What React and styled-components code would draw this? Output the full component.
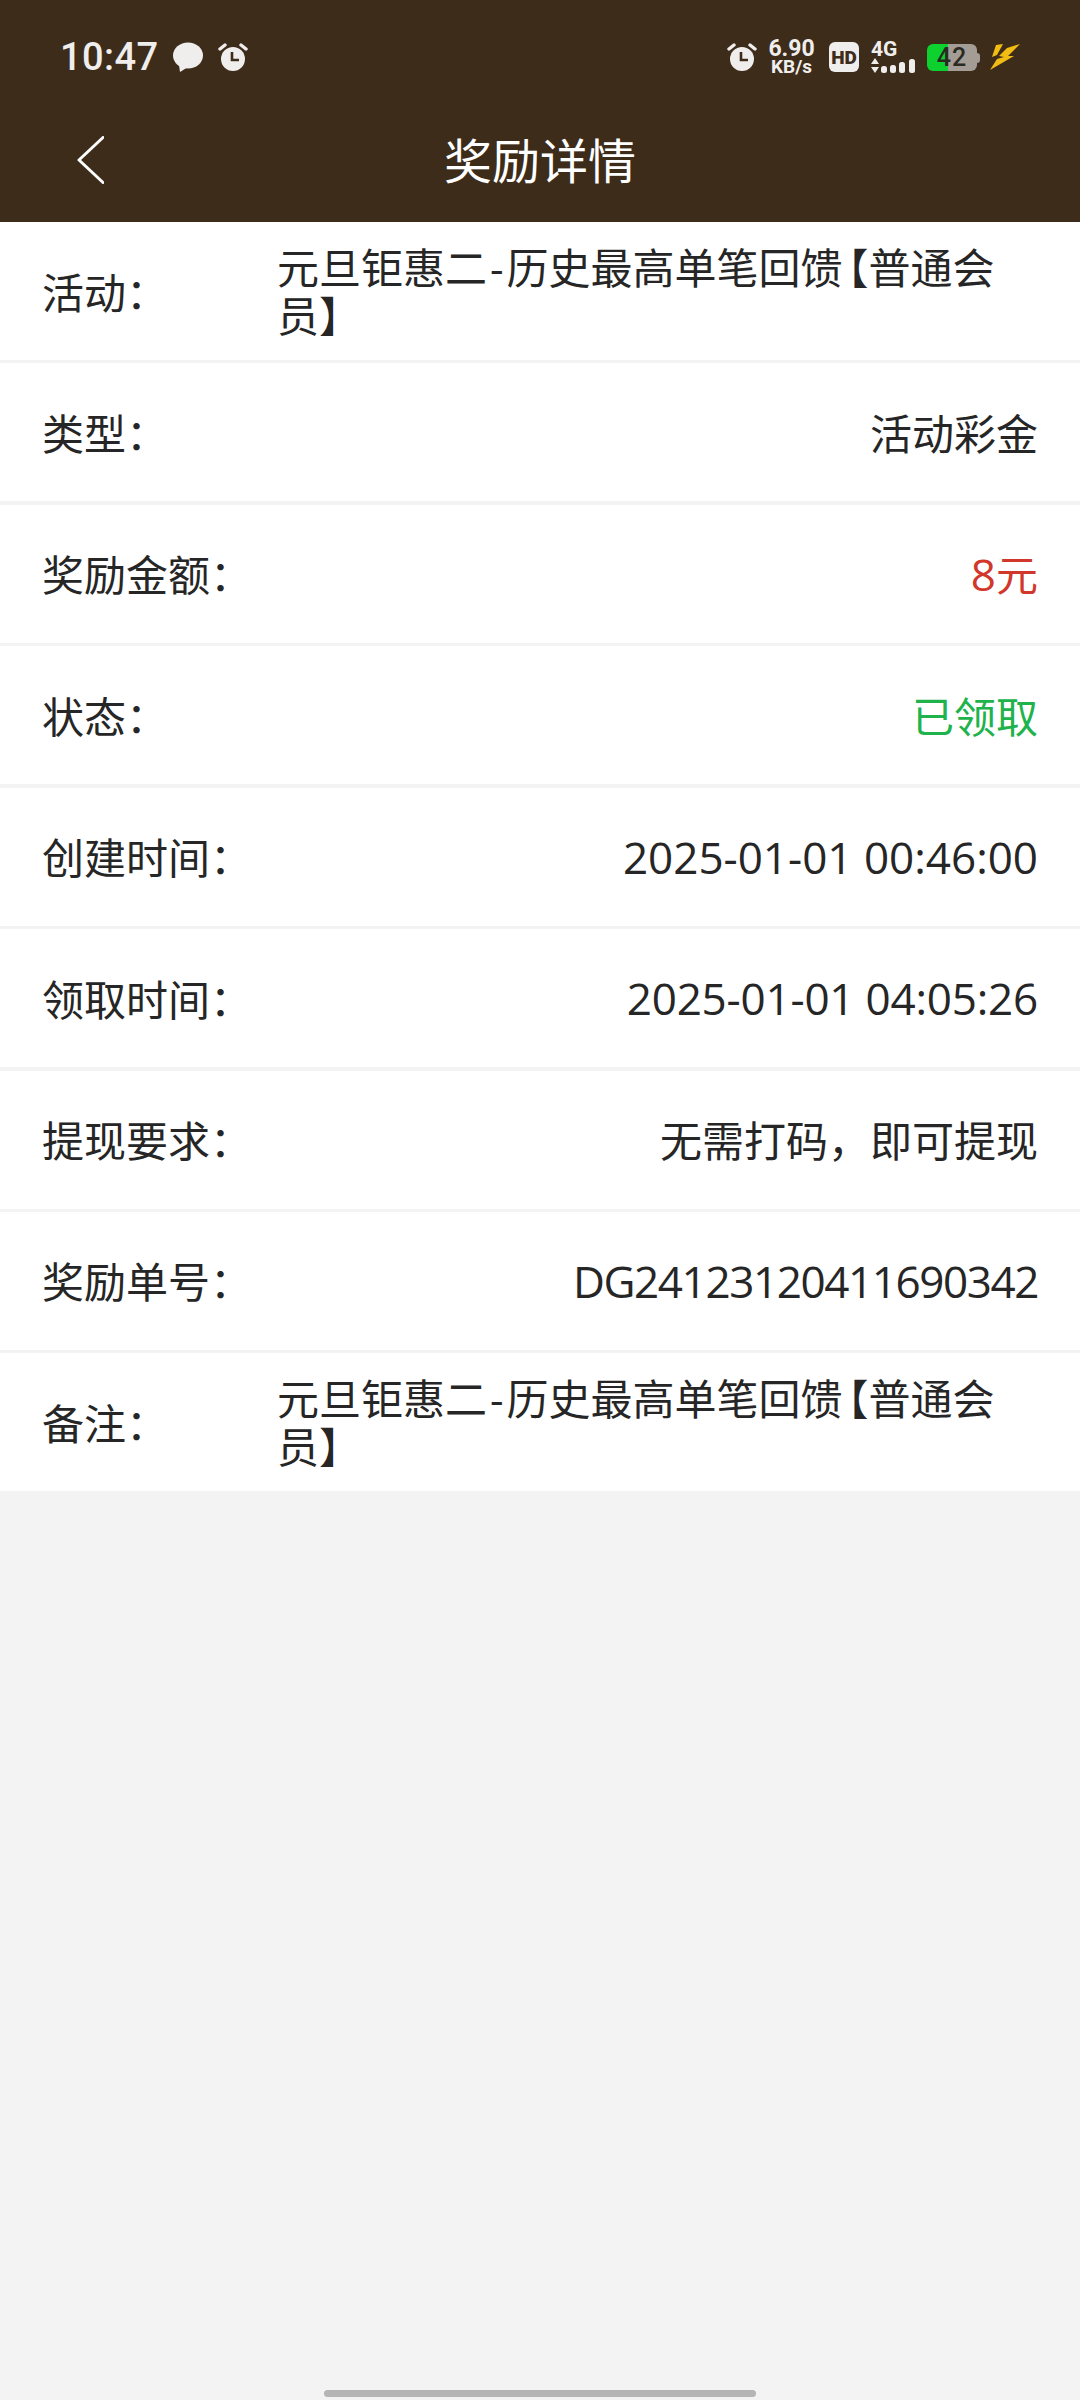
import React from "react";
import styled, { createGlobalStyle } from "styled-components";

const GlobalStyle = createGlobalStyle`
  html, body {
    margin: 0;
    padding: 0;
    background: #f3f3f3;
    font-family: "Noto Sans CJK SC", sans-serif;
  }
`;

const Page = styled.div`
  width: 1080px;
  height: 2400px;
  display: flex;
  flex-direction: column;
  background: #f3f3f3;
  overflow: hidden;
`;
const Header = styled.header`
  background: #3e2c1b;
  display: flex;
  flex-direction: column;
`;
const StatusBar = styled.div`
  height: 82px;
  padding: 16px 60px 0 60px;
  display: flex;
  align-items: center;
  justify-content: space-between;
  color: #f0eeec;
  font-family: Roboto, sans-serif;
`;
const StatusGroup = styled.div`
  display: flex;
  align-items: center;
  gap: ${({ $gap }) => $gap}px;
`;
const Clock = styled.span`
  font-size: 38px;
  font-weight: 500;
  letter-spacing: 0.4px;
`;
const Speed = styled.div`
  width: 45px;
  margin-right: 3px;
  display: flex;
  flex-direction: column;
  align-items: center;
  font-weight: 700;
  white-space: nowrap;
  span:first-child {
    font-size: 23px;
    line-height: 18px;
  }
  span:last-child {
    font-size: 19px;
    line-height: 17px;
  }
`;
const HdBadge = styled.span`
  width: 30px;
  height: 30px;
  border-radius: 6px;
  background: #f0eeec;
  color: #3e2c1b;
  font-size: 19px;
  font-weight: 900;
  display: flex;
  align-items: center;
  justify-content: center;
`;
const Signal = styled.div`
  width: 44px;
  display: flex;
  flex-direction: column;
`;
const SignalLabel = styled.span`
  font-size: 21px;
  font-weight: 700;
  line-height: 15px;
`;
const Battery = styled.div`
  position: relative;
  width: 50px;
  height: 27px;
  margin-right: 1px;
  border-radius: 6px;
  background: linear-gradient(90deg, #0cd12f 0 42%, #a39d95 42% 100%);
  display: flex;
  align-items: center;
  justify-content: center;
  color: #2b2a22;
  font-size: 25px;
  font-weight: 500;
  letter-spacing: 1px;
  &::after {
    content: "";
    position: absolute;
    right: -3px;
    top: 9px;
    width: 3px;
    height: 10px;
    border-radius: 0 3px 3px 0;
    background: #a39d95;
  }
`;
const Nav = styled.div`
  height: 124px;
  padding: 0 77px;
  display: flex;
  align-items: center;
  justify-content: space-between;
`;
const NavSide = styled.div`
  width: 27px;
  display: flex;
`;
const Title = styled.h1`
  margin: 0 0 5px;
  color: #fff;
  font-size: 48px;
  font-weight: 400;
`;
const List = styled.div`
  display: flex;
  flex-direction: column;
  gap: 3.43px;
  background: #f3f3f3;
`;
const Row = styled.div`
  box-sizing: border-box;
  height: 138px;
  padding: 0 42px 2px;
  background: #fff;
  display: flex;
  align-items: center;
  font-size: 42px;
  color: #262626;
`;
const Label = styled.span`
  flex: 0 0 235px;
`;
const Value = styled.span`
  margin-left: auto;
  color: ${({ $tone }) => $tone || "#262626"};
`;
const LatinValue = styled.span`
  margin-left: auto;
  padding-top: 2px;
  color: #262626;
  font-family: "Open Sans", sans-serif;
  font-size: 44px;
  letter-spacing: ${({ $spacing }) => $spacing || 0}px;
`;
const Amount = styled.span`
  font-family: "Open Sans", sans-serif;
  font-size: 44px;
  line-height: 1;
`;
const LongValue = styled.div`
  width: 745px;
  line-height: 48px;
`;
const Dash = styled.span`
  font-family: "Open Sans", sans-serif;
  line-height: 0;
  margin: 0 3px;
`;
const Bracket = styled.span`
  margin-left: -16px;
`;
const Filler = styled.div`
  flex: 1;
`;
const HomeBar = styled.div`
  width: 432px;
  height: 7px;
  margin: 0 auto 3px;
  border-radius: 4px;
  background: #b5b5b5;
`;

const AlarmIcon = () => (
  <svg width="30" height="30" viewBox="0 0 30 30">
    <circle cx="15" cy="17" r="12" fill="#f0eeec" />
    <path d="M14 10v8h7" fill="none" stroke="#3e2c1b" strokeWidth="2.6" />
    <path d="M2 7l5-4M28 7l-5-4" stroke="#f0eeec" strokeWidth="3.4" strokeLinecap="round" />
  </svg>
);

const BubbleIcon = () => (
  <svg width="30" height="30" viewBox="0 0 30 30">
    <ellipse cx="15" cy="13.5" rx="15" ry="13" fill="#f0eeec" />
    <path d="M6 23l1 7 8-5z" fill="#f0eeec" />
  </svg>
);

const SignalBars = () => (
  <svg width="44" height="16" viewBox="0 0 44 16">
    <path d="M4 1l4 6H0zM4 16l4-6H0z" fill="#f0eeec" />
    <rect x="10" y="9" width="6" height="7" rx="2.5" fill="#f0eeec" />
    <rect x="19" y="8" width="6" height="8" rx="2.5" fill="#f0eeec" />
    <rect x="28" y="5" width="6" height="11" rx="2.5" fill="#f0eeec" />
    <rect x="38" y="2" width="6" height="14" rx="2.5" fill="#f0eeec" />
  </svg>
);

const BoltIcon = () => (
  <svg width="30" height="26" viewBox="0 0 30 26">
    <path d="M6 1l7-1-6 11-5 2z" fill="#f2bd12" />
    <path d="M17 4L30 0 18 12l6 0L0 26l7-11 7-2-5-1z" fill="#f2bd12" />
  </svg>
);

const BackIcon = () => (
  <svg width="27" height="48" viewBox="0 0 27 48">
    <path d="M26 1.5L2 24l24 22.5" fill="none" stroke="#fff" strokeWidth="3" strokeLinecap="round" strokeLinejoin="round" />
  </svg>
);

const Promo = () => (
  <LongValue>
    元旦钜惠二<Dash>-</Dash>历史最高单笔回馈<Bracket>【</Bracket>普通会员】
  </LongValue>
);

const rows = [
  { label: "活动：", promo: true },
  { label: "类型：", value: "活动彩金" },
  { label: "奖励金额：", amount: "8", value: "元", tone: "#d1372a" },
  { label: "状态：", value: "已领取", tone: "#20b24b" },
  { label: "创建时间：", latin: "2025-01-01 00:46:00" },
  { label: "领取时间：", latin: "2025-01-01 04:05:26", spacing: -0.2 },
  { label: "提现要求：", value: "无需打码，即可提现" },
  { label: "奖励单号：", latin: "DG24123120411690342", spacing: -1.4 },
  { label: "备注：", promo: true },
];

const DetailRow = ({ row }) => {
  if (row.promo) return <Promo />;
  if (row.latin) return <LatinValue $spacing={row.spacing}>{row.latin}</LatinValue>;
  return (
    <Value $tone={row.tone}>
      {row.amount && <Amount>{row.amount}</Amount>}
      {row.value}
    </Value>
  );
};

export default function App() {
  return (
    <Page>
      <GlobalStyle />
      <Header>
        <StatusBar>
          <StatusGroup $gap={15}>
            <Clock>10:47</Clock>
            <BubbleIcon />
            <AlarmIcon />
          </StatusGroup>
          <StatusGroup $gap={12}>
            <AlarmIcon />
            <Speed>
              <span>6.90</span>
              <span>KB/s</span>
            </Speed>
            <HdBadge>HD</HdBadge>
            <Signal>
              <SignalLabel>4G</SignalLabel>
              <SignalBars />
            </Signal>
            <Battery>42</Battery>
            <BoltIcon />
          </StatusGroup>
        </StatusBar>
        <Nav>
          <NavSide>
            <BackIcon />
          </NavSide>
          <Title>奖励详情</Title>
          <NavSide />
        </Nav>
      </Header>
      <List>
        {rows.map((row) => (
          <Row key={row.label}>
            <Label>{row.label}</Label>
            <DetailRow row={row} />
          </Row>
        ))}
      </List>
      <Filler />
      <HomeBar />
    </Page>
  );
}
